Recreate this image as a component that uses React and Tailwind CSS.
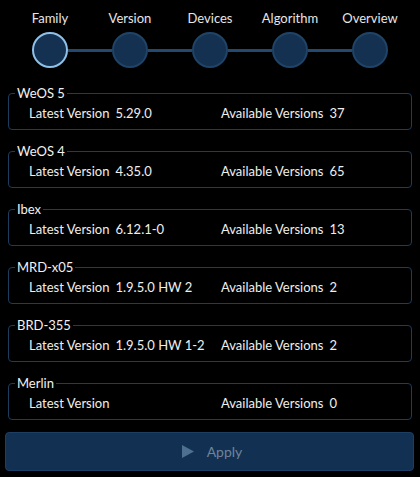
import { useState } from 'react'

const pasos = ['Family', 'Version', 'Devices', 'Algorithm', 'Overview']

const familias = [
  { nombre: 'WeOS 5', ultima: '5.29.0', disponibles: 37 },
  { nombre: 'WeOS 4', ultima: '4.35.0', disponibles: 65 },
  { nombre: 'Ibex', ultima: '6.12.1-0', disponibles: 13 },
  { nombre: 'MRD-x05', ultima: '1.9.5.0 HW 2', disponibles: 2 },
  { nombre: 'BRD-355', ultima: '1.9.5.0 HW 1-2', disponibles: 2 },
  { nombre: 'Merlin', ultima: '', disponibles: 0 },
]

function Stepper({ activo }) {
  return (
    <div className="flex px-[10px] pt-[9px]">
      {pasos.map((p, i) => (
        <div key={p} className="flex w-[80px] flex-col items-center">
          <span className="h-[18px] text-[13px] leading-[18px] text-[#e6e6e6]">{p}</span>
          <div className="mt-[5px] flex w-full items-center">
            <div className={`h-[3px] flex-1 ${i === 0 ? 'bg-transparent' : 'bg-[#23496e]'}`} />
            <div
              className={`h-[36px] w-[36px] rounded-full border-2 bg-[#153152] ${
                i === activo ? 'border-[#8ec0e8]' : 'border-[#1f4468]'
              }`}
            />
            <div className={`h-[3px] flex-1 ${i === pasos.length - 1 ? 'bg-transparent' : 'bg-[#23496e]'}`} />
          </div>
        </div>
      ))}
    </div>
  )
}

function Familia({ f }) {
  return (
    <fieldset className="h-[45px] rounded-[4px] border border-[#1d3d5e] px-[6px]">
      <legend className="px-[2px] text-[13px] leading-[16px] text-[#f2f2f2]">{f.nombre}</legend>
      <div className="grid grid-cols-[192px_1fr] pl-[14px] pt-[4px] text-[13px] leading-[16px] text-[#efefef]">
        <span>
          Latest Version<span className="ml-[6px]">{f.ultima}</span>
        </span>
        <span>
          Available Versions<span className="ml-[6px]">{f.disponibles}</span>
        </span>
      </div>
    </fieldset>
  )
}

export default function App() {
  const [activo] = useState(0)

  return (
    <div className="h-[477px] w-[420px] overflow-hidden bg-black" style={{ fontFamily: 'Lato, "Noto Sans", sans-serif' }}>
      <Stepper activo={activo} />
      <div className="mt-[17px] flex flex-col gap-[13px] px-[8px]">
        {familias.map((f) => (
          <Familia key={f.nombre} f={f} />
        ))}
      </div>
      <div className="mt-[12px] px-[5px]">
        <button
          disabled
          className="flex h-[39px] w-[409px] items-center justify-center gap-[13px] rounded-[4px] border border-[#1c3f63] bg-[#123152] pl-[5px] text-[14px] text-[#6f8499]"
        >
          <svg width="12" height="13" viewBox="0 0 12 13">
            <path d="M0 0 L12 6.5 L0 13 Z" fill="#4e6f8f" />
          </svg>
          Apply
        </button>
      </div>
    </div>
  )
}
